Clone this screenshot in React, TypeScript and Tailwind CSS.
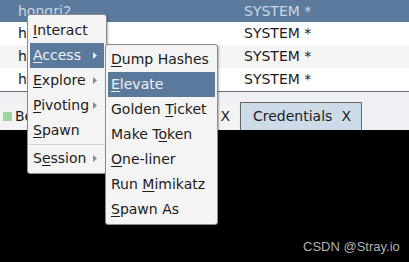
import React from 'react';

type Item = { label: string; key: number; sub?: boolean; active?: boolean; sep?: boolean };

const mainMenu: Item[] = [
  { label: 'Interact', key: 0 },
  { label: 'Access', key: 0, sub: true, active: true },
  { label: 'Explore', key: 0, sub: true },
  { label: 'Pivoting', key: 0, sub: true },
  { label: 'Spawn', key: 0 },
  { label: 'Session', key: 1, sub: true, sep: true },
];

const accessMenu: Item[] = [
  { label: 'Dump Hashes', key: 0 },
  { label: 'Elevate', key: 0, active: true },
  { label: 'Golden Ticket', key: 7 },
  { label: 'Make Token', key: 6 },
  { label: 'One-liner', key: 0 },
  { label: 'Run Mimikatz', key: 4 },
  { label: 'Spawn As', key: 0 },
];

function Mnemonic({ label, k }: { label: string; k: number }) {
  return (
    <span className="whitespace-nowrap">
      {label.slice(0, k)}
      <span className="underline underline-offset-2">{label[k]}</span>
      {label.slice(k + 1)}
    </span>
  );
}

function MenuRow({ item }: { item: Item }) {
  return (
    <>
      {item.sep && <div className="mx-[1px] my-[1px] h-px bg-[#d0d0d0]" />}
      <div
        className={`mx-[2px] flex h-[25px] items-center justify-between pl-[3px] pr-[7px] ${
          item.active ? 'bg-[#5b7a9b] text-[#eef2f6]' : 'text-[#1c1c1c]'
        }`}
      >
        <Mnemonic label={item.label} k={item.key} />
        {item.sub && (
          <svg width="4" height="7" viewBox="0 0 4 7" className="shrink-0">
            <path d="M0 0 L4 3.5 L0 7 Z" fill={item.active ? '#e8eef4' : '#8a8a8a'} />
          </svg>
        )}
      </div>
    </>
  );
}

const rows = [
  { host: 'hongri2', bg: 'bg-[#5c7b9c] text-[#c9d6e4]' },
  { host: 'hongri2', bg: 'bg-white text-[#1c1c1c]' },
  { host: 'hongri2', bg: 'bg-[#f5f5f5] text-[#1c1c1c]' },
  { host: 'hongri2', bg: 'bg-white text-[#1c1c1c]' },
];

export default function App() {
  return (
    <div
      className="relative h-[262px] w-[409px] overflow-hidden bg-black text-[14px]"
      style={{ fontFamily: '"DejaVu Sans", sans-serif' }}
    >
      {/* session table */}
      <div className="flex flex-col">
        {rows.map((r, i) => (
          <div key={i} className={`flex ${i === 0 ? 'h-[22px]' : 'h-[23px]'} items-center ${r.bg}`}>
            <span className="w-[244px] pl-[18px]">{r.host}</span>
            <span>SYSTEM *</span>
          </div>
        ))}
        <div className="h-px bg-[#6b6b6b]" />
      </div>

      {/* tab bar */}
      <div className="flex h-[38px] items-end bg-[#eef0f3]">
        <div className="flex h-[28px] w-[238px] items-center bg-[#f3f3f3] pl-[3px]">
          <span className="mr-[3px] h-[9px] w-[9px] shrink-0 bg-[#9fd49a]" />
          <span className="whitespace-nowrap text-[#1c1c1c]">Beacon 10.10.10.10@1337</span>
          <span className="ml-auto pr-[8px] text-[#1c1c1c]">X</span>
        </div>
        <div className="ml-[2px] flex h-[28px] w-[122px] items-center border border-b-0 border-[#666] bg-[#cddae8] pl-[12px] text-[#1c1c1c]">
          <span>Credentials</span>
          <span className="ml-auto pr-[10px]">X</span>
        </div>
      </div>

      {/* context menu */}
      <div className="absolute left-[27px] top-[14px] w-[80px] rounded-[3px] border border-[#8c8c8c] bg-[#f4f4f4] pb-[2px] pt-[3px] shadow-[1px_1px_2px_rgba(0,0,0,0.3)]">
        {mainMenu.map((it) => (
          <MenuRow key={it.label} item={it} />
        ))}
      </div>

      {/* access submenu */}
      <div className="absolute left-[105px] top-[44px] w-[113px] rounded-[3px] border border-[#8c8c8c] bg-[#f4f4f4] pb-[2px] pt-[2px] shadow-[1px_1px_2px_rgba(0,0,0,0.3)]">
        {accessMenu.map((it) => (
          <MenuRow key={it.label} item={{ ...it }} />
        ))}
      </div>

      <div
        className="absolute left-[303px] top-[237px] text-[13px] text-[#b0b0b0]"
        style={{ fontFamily: '"Liberation Sans", Arial, sans-serif' }}
      >
        CSDN @Stray.io
      </div>
    </div>
  );
}
